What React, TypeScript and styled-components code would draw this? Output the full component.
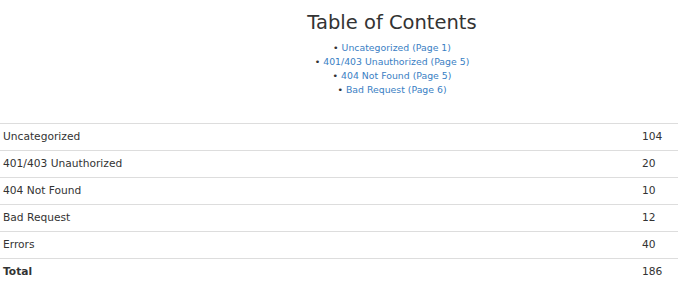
import React from "react";
import styled, { createGlobalStyle } from "styled-components";

const GlobalStyle = createGlobalStyle`
  body {
    margin: 0;
    background: #fff;
    font-family: "DejaVu Sans", Verdana, sans-serif;
    color: #333;
  }
`;

const Page = styled.main`
  width: 678px;
`;

const Header = styled.header`
  padding: 12px 0 0 106px;
  text-align: center;
`;

const Title = styled.h1`
  margin: 0;
  font-size: 19.5px;
  font-weight: normal;
  line-height: 21px;
`;

const TocList = styled.ul`
  list-style: none;
  margin: 8px 0 0;
  padding: 0;
  font-size: 9.33px;
  line-height: 14px;
`;

const TocItem = styled.li`
  &::before {
    content: "\\2022";
    margin-right: 3px;
    color: #333;
  }
`;

const TocLink = styled.a`
  color: #3a80c4;
  text-decoration: none;
`;

const Table = styled.table`
  width: 100%;
  margin-top: 26px;
  border-collapse: collapse;
  font-size: 10.67px;
  line-height: 16px;
`;

const Cell = styled.td<{ $numeric?: boolean; $bold?: boolean }>`
  border-top: 1px solid #ddd;
  padding: 5px 3px;
  width: ${({ $numeric }) => ($numeric ? "33px" : "auto")};
  font-weight: ${({ $bold }) => ($bold ? "bold" : "normal")};
  text-align: left;
`;

type Section = {
  name: string;
  count: number;
  page?: number;
};

const sections: Section[] = [
  { name: "Uncategorized", count: 104, page: 1 },
  { name: "401/403 Unauthorized", count: 20, page: 5 },
  { name: "404 Not Found", count: 10, page: 5 },
  { name: "Bad Request", count: 12, page: 6 },
  { name: "Errors", count: 40 },
];

export default function App() {
  const total = sections.reduce((sum, s) => sum + s.count, 0);

  return (
    <Page>
      <GlobalStyle />

      <Header>
        <Title>Table of Contents</Title>

        <TocList>
          {sections
            .filter((s) => s.page !== undefined)
            .map((s) => (
              <TocItem key={s.name}>
                <TocLink href={`#page-${s.page}`}>
                  {s.name} (Page {s.page})
                </TocLink>
              </TocItem>
            ))}
        </TocList>
      </Header>

      <Table>
        <tbody>
          {sections.map((s) => (
            <tr key={s.name}>
              <Cell>{s.name}</Cell>
              <Cell $numeric>{s.count}</Cell>
            </tr>
          ))}
          <tr>
            <Cell $bold>Total</Cell>
            <Cell $numeric>{total}</Cell>
          </tr>
        </tbody>
      </Table>
    </Page>
  );
}
